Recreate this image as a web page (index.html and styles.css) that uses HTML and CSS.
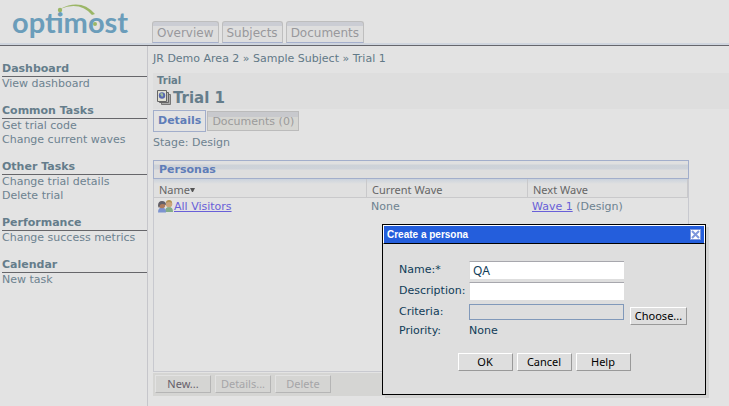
FILE: index.html
```html
<!DOCTYPE html>
<html lang="en">
<head>
<meta charset="utf-8">
<title>Trial 1 - optimost</title>
<link rel="stylesheet" href="styles.css">
</head>
<body>
<header class="top">
  <a class="logo" href="#">optimost
    <svg class="logo-arc" viewBox="0 0 42 24" width="42" height="24" aria-hidden="true">
      <path d="M3 5Q24-6 38 10L35 11Q23-3 3 5Z" fill="#9bb666"/>
      <circle cx="3" cy="6" r="2.200" fill="#9bb666"/>
      <circle cx="38" cy="20" r="2" fill="#9bb666"/>
    </svg>
  </a>
  <nav class="main-nav">
    <a href="#">Overview</a>
    <a href="#">Subjects</a>
    <a href="#">Documents</a>
  </nav>
</header>
<div class="page">
  <aside class="side">
    <section><h2>Dashboard</h2><a href="#">View dashboard</a></section>
    <section><h2>Common Tasks</h2><a href="#">Get trial code</a><a href="#">Change current waves</a></section>
    <section><h2>Other Tasks</h2><a href="#">Change trial details</a><a href="#">Delete trial</a></section>
    <section><h2>Performance</h2><a href="#">Change success metrics</a></section>
    <section><h2>Calendar</h2><a href="#">New task</a></section>
  </aside>
  <main class="content">
    <nav class="crumbs"><a href="#">JR Demo Area 2</a> » <a href="#">Sample Subject</a> » <a href="#">Trial 1</a></nav>
    <div class="title">
      <div class="kind">Trial</div>
      <h1>
        <svg viewBox="0 0 15 16" width="15" height="16" aria-hidden="true">
          <path d="M4.500 4.500h9v10h-9z" fill="#aaa" stroke="#777"/>
          <path d="M2.500 2.500h9v10h-9z" fill="#bbb" stroke="#666"/>
          <path d="M.5.5h9v11h-9z" fill="#e0e0d4" stroke="#666"/>
          <circle cx="5" cy="5.500" r="3.200" fill="#5868b0"/>
          <path d="M3 4q2-2 3 0t-1 3z" fill="#9fbe9c"/>
        </svg>Trial 1</h1>
    </div>
    <nav class="tabs"><a class="on" href="#">Details</a><a href="#">Documents (0)</a></nav>
    <p class="stage">Stage: Design</p>
    <section class="panel">
      <h2>Personas</h2>
      <div class="list">
        <table>
          <thead><tr><th class="c1">Name<svg viewBox="0 0 5 4" width="5" height="4" aria-hidden="true"><path d="M0 0h5L3 4H2z" fill="#555"/></svg></th><th class="c2">Current Wave</th><th>Next Wave</th></tr></thead>
          <tbody><tr>
            <td><svg viewBox="0 0 15 13" width="15" height="13" aria-hidden="true">
              <path d="M7 12q0-5 4-5t4 5z" fill="#83ad88"/><circle cx="11" cy="4" r="3.300" fill="#cba57b"/><path d="M8 3q0-3 3-3t3 3q-3-2-6 0z" fill="#b19352"/>
              <path d="M0 12.500q0-5 4-5t4 5z" fill="#7c93d0"/><circle cx="4" cy="5" r="3.300" fill="#ad7b5d"/><path d="M0 6q0-5 4-5t4 4q-4-2-6 0l-1 3z" fill="#626068"/>
            </svg><a href="#">All Visitors</a></td>
            <td>None</td>
            <td><a href="#">Wave 1</a> (Design)</td>
          </tr></tbody>
        </table>
      </div>
      <div class="actions">
        <button type="button">New...</button>
        <button type="button" disabled>Details...</button>
        <button type="button" disabled>Delete</button>
      </div>
    </section>
  </main>
</div>
<form class="dialog" role="dialog" aria-labelledby="dlg">
  <div class="bar"><span id="dlg">Create a persona</span>
    <button class="close" type="button" aria-label="Close"><svg viewBox="0 0 9 9" width="9" height="9" aria-hidden="true"><path d="M1 1l7 7M8 1L1 8" stroke="#7d97dc" stroke-width="2"/></svg></button>
  </div>
  <div class="fields">
    <label for="name">Name:*</label><input id="name" type="text" value="QA">
    <label for="desc">Description:</label><input id="desc" type="text">
    <label for="crit">Criteria:</label><input id="crit" class="flat" type="text" readonly><button class="choose" type="button">Choose...</button>
    <span>Priority:</span><span>None</span>
  </div>
  <div class="buttons">
    <button type="button">OK</button>
    <button type="button">Cancel</button>
    <button type="button">Help</button>
  </div>
</form>
</body>
</html>
```

FILE: styles.css
```css
* { box-sizing: border-box; }
body {
  margin: 0;
  min-height: 100vh;
  display: flex;
  flex-direction: column;
  background: #e3e3e3;
  color: #6d8290;
  font: 11px/14px "DejaVu Sans", sans-serif;
}
a { color: inherit; text-decoration: none; }
h1, h2, p { margin: 0; font-size: 11px; }
svg { display: inline-block; }

.top {
  display: flex;
  align-items: flex-end;
  height: 46px;
  border-bottom: 1px solid #66666c;
  box-shadow: inset 0 -2px #cfd5de;
}
.logo {
  position: relative;
  width: 152px;
  padding-left: 12px;
  align-self: flex-start;
  color: #6b9dba;
  font: bold 29px/44px Lato, sans-serif;
}
.logo-arc { position: absolute; left: 57px; top: 4px; }
.main-nav { display: flex; gap: 3px; padding-bottom: 2px; }
.main-nav a {
  height: 22px;
  padding: 0 4px;
  border: 1px solid #bebebe;
  border-bottom: 1px solid #a5afcc;
  border-radius: 3px 3px 0 0;
  background: linear-gradient(#cbcdd4 4px, #dedede 4px);
  color: #98989c;
  font-size: 12px;
  line-height: 22px;
}

.page { flex: 1; display: flex; }
.side {
  width: 148px;
  padding: 16px 0 0 2px;
  border-right: 1px solid #c6c6cb;
}
.side section { margin-bottom: 13px; }
.side h2 { line-height: 14px; border-bottom: 1px solid #66666a; color: #657d8b; }
.side a { display: block; line-height: 14px; }

.content { flex: 1; padding: 6px 0 0 5px; }
.crumbs { height: 21px; color: #627987; }
.title { height: 36px; padding: 1px 4px; background: #dedede; color: #657d8b; }
.kind { font-weight: bold; line-height: 13px; font-size: 10px; }
h1 { display: flex; align-items: center; gap: 1px; font-size: 15px; line-height: 22px; }
.tabs { display: flex; gap: 1px; margin-top: 1px; align-items: center; height: 22px; }
.tabs a {
  height: 20px;
  padding: 0 4px;
  border: 1px solid #bbb;
  background: linear-gradient(#c8c9cd 5px, #d6d6d2 5px);
  color: #9b9b9b;
  line-height: 20px;
}
.tabs .on {
  height: 22px;
  border-color: #a2aecb;
  background: #e3e3e3;
  color: #5f7db8;
  font-weight: bold;
}
.stage { font-weight: normal; margin: 4px 0 10px; }

.panel { margin-right: 40px; }
.panel h2 {
  height: 19px;
  padding-left: 5px;
  border: 1px solid #a2aecb;
  background: linear-gradient(#e0e0e0 3px, #cdd2d8 4px, #cfd3da 8px, #dedede 9px);
  color: #5f7db8;
  line-height: 18px;
}
.list { height: 193px; border: solid #c8c9cf; border-width: 0 1px 1px; }
table { width: 100%; table-layout: fixed; border-collapse: separate; border-spacing: 0; }
th {
  height: 19px;
  padding: 2px 5px 0;
  border: solid #c9c9cb;
  border-width: 0 1px 1px 0;
  background: linear-gradient(#cbd3dd, #e0e0e0 5px);
  color: #666;
  font: 11px/15px "Noto Sans", sans-serif;
  text-align: left;
}
th svg { vertical-align: 2px; }
.c1 { width: 213px; }
.c2 { width: 161px; }
td { padding: 2px 4px; line-height: 14px; }
td svg { vertical-align: -3px; margin-right: 1px; }
td a { color: #685fd8; text-decoration: underline; }
.actions { display: flex; gap: 4px; margin-top: 1px; padding: 2px; height: 23px; background: #d5d5d3; }

button {
  width: 55px;
  height: 18px;
  padding: 0;
  border: 1px solid;
  border-color: #fff #999 #999 #fff;
  background: #dedede;
  color: #000;
  font: 11px/14px "Noto Sans", sans-serif;
}
.actions button { width: 56px; border-color: #e2e2e2 #b5b5b5 #b5b5b5 #e2e2e2; background: #d5d5d3; color: #66606a; }
.actions button:disabled { color: #a5a5a8; }

.dialog {
  position: absolute;
  left: 382px;
  top: 224px;
  width: 324px;
  height: 171px;
  border: 1px solid #000;
  background: #dedede;
  box-shadow: 3px 3px #d3d3d2;
  color: #103c58;
}
.bar {
  display: flex;
  align-items: center;
  justify-content: space-between;
  height: 19px;
  padding: 0 3px;
  border: solid #fff;
  border-width: 1px 1px 0;
  border-bottom: 1px solid #000;
  background: #245edc;
  color: #fff;
  font: bold 11px/16px "Liberation Sans", sans-serif;
}
.bar span { font-size: 10px; }
.close { display: flex; width: 11px; height: 11px; border-color: #7d97dc; background: #fff; }
.fields {
  display: grid;
  grid-template-columns: 70px 155px 57px;
  grid-template-rows: 18px 18px 18px 14px;
  align-items: center;
  row-gap: 3px;
  padding: 17px 0 0 16px;
}
.fields label, .fields span:nth-last-child(2) { grid-column: 1; line-height: 16px; }
.fields input {
  width: 155px;
  height: 18px;
  padding: 0 3px;
  border: solid #a7a7ad;
  border-width: 1px 0 0 1px;
  border-left-color: #ddd;
  background: #fff;
  color: #103c58;
  font: 12px/14px "Noto Sans", sans-serif;
}
.fields .flat { height: 16px; border: 1px solid #8199ba; background: #dedede; }
.choose { width: 57px; margin: 8px 0 0 6px; }
.buttons { display: flex; gap: 4px; justify-content: center; padding-top: 15px; }
```
